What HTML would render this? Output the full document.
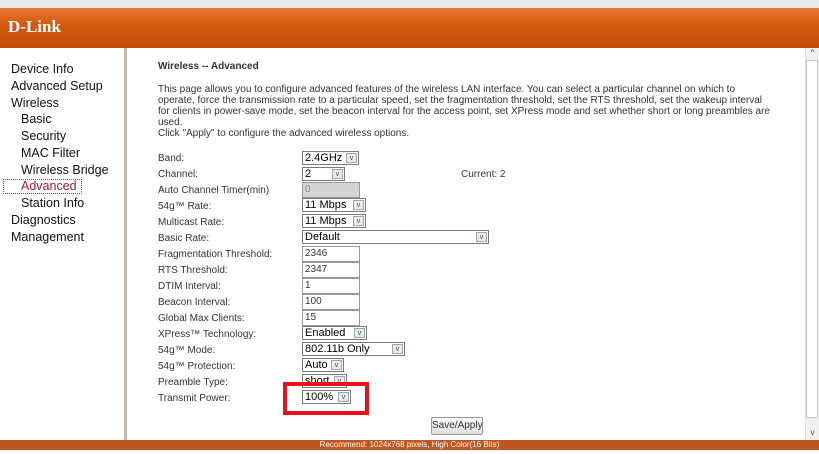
<!DOCTYPE html>
<html><head><style>
*{margin:0;padding:0;box-sizing:border-box}
body{width:819px;height:454px;overflow:hidden;background:#fff;font-family:"Liberation Sans",sans-serif;position:relative}
.a{position:absolute}
.top{left:0;top:0;width:819px;height:8px;background:#e8e8e8}
.hdr{left:0;top:8px;width:819px;height:40px;background:linear-gradient(180deg,#e87a30 0%,#d45a10 40%,#c44d0c 100%)}
.logo{left:8px;top:17px;color:#fff;font:bold 17px "Liberation Serif",serif}
.side{left:0;top:48px;width:127px;height:392px;background:#fff;border-right:3px solid #c8b8a8}
.nav{font-size:12.5px;color:#111;left:11px}
.sub{left:21px}
.sel{left:3px;top:179px;width:79px;height:15px;border:1px dotted #b33;color:#a0203a;padding-left:17px;font-size:12.5px;line-height:13px}
.c{font-size:10px;color:#333}
.lbl{left:158px;font-size:10px;color:#333}
.sel2{height:14px;border:1px solid #7a7a7a;background:#fff;font-size:11px;color:#000;padding-left:2px;line-height:12px}
.sel2 i{position:absolute;right:1px;top:1px;width:11px;height:10px;background:#e8eaf0;border:1px solid #9aa;font-style:normal;font-size:7px;text-align:center;line-height:9px;color:#445}
.inp{height:16px;width:58px;border:1px solid #999;background:#fff;font-size:10px;color:#333;padding-left:2px;line-height:14px}
.sb{left:805px;top:48px;width:14px;height:392px;background:#f0f0f0;border-left:1px solid #ddd}
.foot{left:0;top:440px;width:819px;height:10px;background:#c05520;color:#fff;font-size:8px;text-align:center;line-height:10px}
</style></head><body>
<div class="a top"></div>
<div class="a hdr"></div>
<div class="a logo">D-Link</div>
<div class="a side"></div>
<div class="a nav" style="top:62px">Device Info</div>
<div class="a nav" style="top:79px">Advanced Setup</div>
<div class="a nav" style="top:96px">Wireless</div>
<div class="a nav sub" style="top:112px">Basic</div>
<div class="a nav sub" style="top:129px">Security</div>
<div class="a nav sub" style="top:146px">MAC Filter</div>
<div class="a nav sub" style="top:163px">Wireless Bridge</div>
<div class="a sel">Advanced</div>
<div class="a nav sub" style="top:196px">Station Info</div>
<div class="a nav" style="top:213px">Diagnostics</div>
<div class="a nav" style="top:230px">Management</div>

<div class="a c" style="left:158px;top:61px;font-weight:bold">Wireless -- Advanced</div>
<div class="a c" style="left:158px;top:84px;white-space:nowrap;line-height:11px">This page allows you to configure advanced features of the wireless LAN interface. You can select a particular channel on which to<br>operate, force the transmission rate to a particular speed, set the fragmentation threshold, set the RTS threshold, set the wakeup interval<br>for clients in power-save mode, set the beacon interval for the access point, set XPress mode and set whether short or long preambles are<br>used.<br>Click "Apply" to configure the advanced wireless options.</div>

<div class="a lbl" style="top:153px">Band:</div>
<div class="a lbl" style="top:169px">Channel:</div>
<div class="a lbl" style="top:185px">Auto Channel Timer(min)</div>
<div class="a lbl" style="top:201px">54g™ Rate:</div>
<div class="a lbl" style="top:217px">Multicast Rate:</div>
<div class="a lbl" style="top:233px">Basic Rate:</div>
<div class="a lbl" style="top:249px">Fragmentation Threshold:</div>
<div class="a lbl" style="top:265px">RTS Threshold:</div>
<div class="a lbl" style="top:281px">DTIM Interval:</div>
<div class="a lbl" style="top:297px">Beacon Interval:</div>
<div class="a lbl" style="top:313px">Global Max Clients:</div>
<div class="a lbl" style="top:329px">XPress™ Technology:</div>
<div class="a lbl" style="top:345px">54g™ Mode:</div>
<div class="a lbl" style="top:361px">54g™ Protection:</div>
<div class="a lbl" style="top:377px">Preamble Type:</div>
<div class="a lbl" style="top:393px">Transmit Power:</div>
<div class="a c" style="left:461px;top:169px">Current: 2</div>

<div class="a sel2" style="left:302px;top:151px;width:57px">2.4GHz<i>v</i></div>
<div class="a sel2" style="left:302px;top:167px;width:43px">2<i>v</i></div>
<div class="a inp" style="left:302px;top:182px;background:#d4d4d4;color:#888">0</div>
<div class="a sel2" style="left:302px;top:198px;width:64px">11 Mbps<i>v</i></div>
<div class="a sel2" style="left:302px;top:214px;width:64px">11 Mbps<i>v</i></div>
<div class="a sel2" style="left:302px;top:230px;width:187px">Default<i>v</i></div>
<div class="a inp" style="left:302px;top:246px">2346</div>
<div class="a inp" style="left:302px;top:262px">2347</div>
<div class="a inp" style="left:302px;top:278px">1</div>
<div class="a inp" style="left:302px;top:294px">100</div>
<div class="a inp" style="left:302px;top:310px">15</div>
<div class="a sel2" style="left:302px;top:326px;width:65px">Enabled<i>v</i></div>
<div class="a sel2" style="left:302px;top:342px;width:103px">802.11b Only<i>v</i></div>
<div class="a sel2" style="left:302px;top:358px;width:42px">Auto<i>v</i></div>
<div class="a sel2" style="left:302px;top:374px;width:45px">short<i>v</i></div>
<div class="a sel2" style="left:302px;top:390px;width:49px">100%<i>v</i></div>
<div class="a" style="left:283px;top:382px;width:86px;height:33px;border:4px solid #e8101c"></div>
<div class="a" style="left:431px;top:417px;width:52px;height:18px;border:1px solid #999;background:linear-gradient(#fafafa,#e0e0e0);font-size:10px;color:#333;text-align:center;line-height:16px;border-radius:2px">Save/Apply</div>

<div class="a sb"></div>
<div class="a" style="left:806px;top:48px;width:13px;height:12px;background:#f0f0f0;font-size:8px;text-align:center;color:#444">^</div>
<div class="a" style="left:806px;top:60px;width:12px;height:358px;background:#fff;border:1px solid #c8c8c8"></div>
<div class="a" style="left:806px;top:428px;width:13px;height:12px;font-size:8px;text-align:center;color:#444">v</div>
<div class="a foot">Recommend: 1024x768 pixels, High Color(16 Bits)</div>
</body></html>
